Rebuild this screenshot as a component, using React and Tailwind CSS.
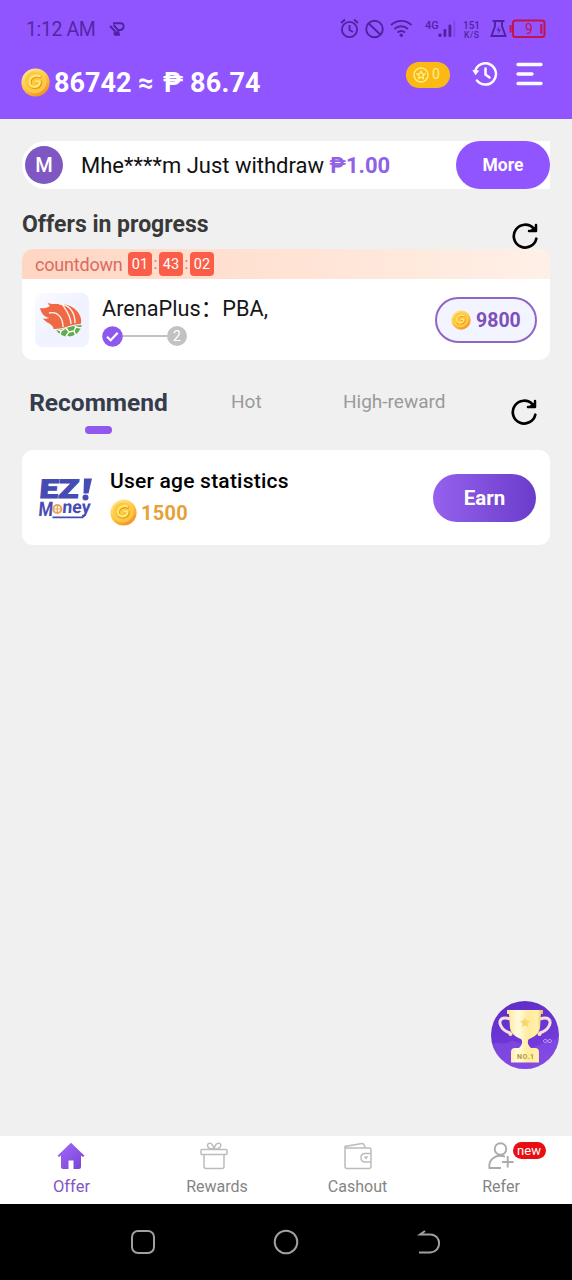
import React from "react";

function Coin({ id, className }) {
  return (
    <svg viewBox="0 0 28 28" className={className}>
      <defs>
        <linearGradient id={id} x1="0.2" y1="0" x2="0.8" y2="1">
          <stop offset="0" stopColor="#ffe9a0" />
          <stop offset="0.5" stopColor="#ffc53d" />
          <stop offset="1" stopColor="#f58a1c" />
        </linearGradient>
      </defs>
      <circle cx="14" cy="14" r="13.6" fill={`url(#${id})`} />
      <circle cx="13.6" cy="13.4" r="10.4" fill="#ffc93f" stroke="#ffd970" strokeWidth="0.6" />
      <path d="M19.500 8.800C14 6.400 8.200 9.400 8.600 14.900c.3 4.600 7.800 5.300 9.800 1.100l.5-2.600h-4.600" fill="none" stroke="#e9961a" strokeWidth="3.200" strokeLinejoin="round" />
      <path d="M19 8C13.500 5.800 7.800 8.800 8.200 14.300c.3 4.400 7.500 5.100 9.500 1.100l.5-2.500h-4.400" fill="none" stroke="#ffe973" strokeWidth="2.300" strokeLinejoin="round" />
    </svg>
  );
}

function StatusIcons() {
  return (
    <svg viewBox="0 0 212 24" className="h-6 w-[212px]" fill="none" stroke="#4f239f" strokeWidth="1.900">
      <circle cx="13.500" cy="12.500" r="7.600" />
      <path d="M13.500 8v5l3.500 2M5 6l4-3.500M22 6l-4-3.500" />
      <circle cx="38.500" cy="12" r="8.300" />
      <path d="M32.500 6.200l12 11.600" />
      <path d="M55 8c6-5.500 14.500-5.500 20.500 0M58.500 12c4-3.600 9.500-3.600 13.500 0M61.500 15.500c2.500-2 5-2 7.500 0" />
      <circle cx="65.300" cy="18.300" r="1.700" fill="#4f239f" stroke="none" />
      <g fill="#4f239f" stroke="none">
        <rect x="102.500" y="16.500" width="3" height="3.500" rx="1.200" />
        <rect x="107.500" y="12" width="2.800" height="8" rx="1.200" />
        <rect x="112.500" y="7.500" width="2.800" height="12.500" rx="1.200" />
        <rect x="117.300" y="3.500" width="2" height="16.500" rx="1" opacity="0.25" />
      </g>
      <path d="M156.500 4h12M159 4.500v4.500l-3.500 10h14l-3.500-10v-4.500" />
      <path d="M163.500 9l-3 4.500h2.500l-1 3.500 3-4.500h-2.500z" fill="#4f239f" stroke="none" />
      <rect x="177" y="3.600" width="31.500" height="16.500" rx="2.500" stroke="#c4124b" strokeWidth="2" />
      <path d="M174.600 8v7.500M205.300 7v9.700" stroke="#c4124b" strokeWidth="2" />
      <g fill="#4f239f" stroke="none" fontFamily="Roboto, sans-serif">
        <text x="89" y="11.500" fontSize="11" fontWeight="500">4G</text>
        <text x="127" y="11.500" fontSize="11.500" textLength="17" lengthAdjust="spacingAndGlyphs" fontWeight="500">151</text>
        <text x="128" y="20.500" fontSize="8.500" textLength="15" fontWeight="500">K/S</text>
        <text x="189" y="17.200" fontSize="14" fill="#c4124b">9</text>
      </g>
    </svg>
  );
}

function Refresh() {
  return (
    <svg viewBox="0 0 28 28" className="h-7 w-7" fill="none" stroke="#000" strokeWidth="2.700" strokeLinecap="round">
      <path d="M25.300 16.700A11.400 11.400 0 1 1 22.500 6.300" />
      <path d="M25 3v6h-7" strokeWidth="2.500" strokeLinejoin="round" />
      <path d="M18.500 8.500l6-4v4.500z" fill="#000" stroke="none" />
    </svg>
  );
}

function Header() {
  return (
    <header className="h-[119px] bg-[#9055ff]">
      <div className="flex h-[57px] items-center pl-[26px] pt-[2px]">
        <span className="w-[83px] text-[19.500px] tracking-[-0.400px] text-[#5426a6]">1:12 AM</span>
        <svg viewBox="0 0 16 14" className="-mt-[2px] h-[14px] w-4" fill="none" stroke="#4f239f" strokeWidth="1.900">
          <path d="M4 1.200h7.500c4.300 0 4 6.200 0 6.800H9L4.500 3M1 4l8.500 8.800M5 10.500l1 2.200h4L9 8.500" />
        </svg>
        <div className="ml-[211px] -mt-px"><StatusIcons /></div>
      </div>
      <div className="flex h-[52px] items-center text-[27px] font-bold text-white">
        <Coin id="coin-head" className="-mt-[2px] ml-[21px] h-[29px] w-[29px]" />
        <span className="ml-[4px] w-[84px]">86742</span>
        <span className="w-[25px] text-[27px]">≈</span>
        <span className="w-[27px]">₱</span>
        <span className="w-[216px] tracking-[0.200px]">86.74</span>
        <div className="-mt-[17px] flex h-[26px] w-[44px] items-center rounded-full bg-[#fdb913] pl-[7px]">
          <svg viewBox="0 0 16 16" className="h-4 w-4" fill="none" stroke="#fff08c" strokeWidth="1.400">
            <circle cx="8" cy="8" r="7" />
            <path d="M8 4.300l1.200 2.400 2.600.3-1.900 1.800.5 2.600L8 10.200l-2.400 1.200.5-2.600L4.200 7l2.600-.3z" />
          </svg>
          <span className="ml-[3px] text-[14px] font-normal text-[#fff08c]">0</span>
        </div>
        <svg viewBox="0 0 26 26" className="-mt-[18px] ml-[22px] h-[26px] w-[26px]" fill="none" stroke="#fff" strokeWidth="2.500" strokeLinecap="round">
          <path d="M3.200 10A10.600 10.600 0 1 1 5 19.500" />
          <path d="M13.500 7.500v6l4 3" />
          <path d="M.3 9l7 .4-3.800 4.900z" fill="#fff" stroke="none" />
        </svg>
        <svg viewBox="0 0 28 26" className="-mt-[18px] ml-[17px] h-[26px] w-7" stroke="#fff" strokeWidth="3.300" strokeLinecap="round">
          <path d="M3 3.500h23M3 13h14M3 22.500h23" />
        </svg>
      </div>
    </header>
  );
}

function NoticeBar() {
  return (
    <section className="flex h-12 items-center rounded-l-full bg-white pl-[3px]">
      <div className="flex h-[38px] w-[38px] shrink-0 items-center justify-center rounded-full bg-[#7f57c2] text-[20px] font-medium text-white">M</div>
      <p className="ml-[18px] w-[375px] whitespace-nowrap text-[22px] text-[#111]">
        Mhe****m Just withdraw <b className="font-bold text-[#9160e4]">₱1.00</b>
      </p>
      <button className="h-12 w-[94px] shrink-0 rounded-full bg-[#9055ff] pt-px text-[17.500px] font-bold text-white">More</button>
    </section>
  );
}

function Digits({ children }) {
  return <span className="flex h-6 w-6 items-center justify-center rounded-[4px] bg-[#fa5e49] pt-[2px] text-[14.500px] text-white">{children}</span>;
}

function ArenaLogo() {
  return (
    <svg viewBox="0 0 54 54" className="h-[54px] w-[54px]">
      <defs>
        <linearGradient id="tile" x2="1" y2="1"><stop stopColor="#fafbff" /><stop offset="0.5" stopColor="#f0f2ff" /><stop offset="1" stopColor="#f1f3ff" /></linearGradient>
        <clipPath id="lower"><path d="M17 37.500c11 0 19-5.500 30-5.500v17H17z" /></clipPath>
      </defs>
      <rect width="54" height="54" rx="8" fill="url(#tile)" />
      <path d="M5 15c5 1 8-.5 10-2-1-1-2-2-2.500-3 5 1.500 9 1 13 1 11 0 19 7 20.500 15 .4 2.500.2 3.500-.4 5C36 31 28 36.500 18.500 36c0-3-3-5-7-7l-4-3.500c3 .6 5 .4 7-.4C9 24 6 20 5 15z" fill="#ee6944" />
      <path d="M14 20c9-2 14 5 14 14M27 11c4 6 9 12 9 20M24 11c10 0 16 8 16 19" fill="none" stroke="#fff3ee" strokeWidth="1.400" />
      <g clipPath="url(#lower)">
        <circle cx="33" cy="29.500" r="14" fill="#62ac4c" />
        <path d="M22 36l4 2-1 4M26 38l5-3 3 4-3 4M31 36l1-3M34 39l5-1 2-4 5 1M39 38l2 5M31 42l3 3M41 34l-3-3" fill="none" stroke="#fff" strokeWidth="1.400" />
      </g>
    </svg>
  );
}

function ProgressCard() {
  return (
    <section className="h-[111px] overflow-hidden rounded-[11px] bg-white">
      <div className="flex h-[30px] items-center bg-linear-to-r from-[#ffd6c2] to-[#fff0e7] pl-[13px] text-[18px] text-[#d96b61]">
        <span className="w-[93px] tracking-[-0.200px]">countdown</span>
        <Digits>01</Digits>
        <span className="w-[7px] text-center text-[16px]">:</span>
        <Digits>43</Digits>
        <span className="w-[7px] text-center text-[16px]">:</span>
        <Digits>02</Digits>
      </div>
      <div className="flex h-[81px] items-center pl-[13px]">
        <ArenaLogo />
        <div className="ml-[13px] flex w-[333px] flex-col pt-[4px]">
          <span className="h-[29px] whitespace-nowrap text-[21.700px] leading-[24px] text-[#161616] font-['Roboto','Noto_Sans_CJK_SC',sans-serif]">ArenaPlus：PBA,</span>
          <div className="flex h-[21px] items-center">
            <svg viewBox="0 0 21 21" className="h-[21px] w-[21px]">
              <circle cx="10.500" cy="10.500" r="10.300" fill="#8e57ee" />
              <path d="M5 10.800l3.700 3.500 7-7.500" fill="none" stroke="#fff" strokeWidth="2.200" />
            </svg>
            <span className="h-[2px] w-[44px] bg-[#c2c2c2]" />
            <span className="flex h-[20px] w-[20px] items-center justify-center rounded-full bg-[#c2c2c2] pt-px text-[14px] text-white">2</span>
          </div>
        </div>
        <button className="flex h-[46px] w-[102px] shrink-0 items-center rounded-full border-2 border-[#8f66c4] bg-[#f2f4ff] pl-[14px] text-[19.500px] font-bold text-[#7f50b8]">
          <Coin id="coin-progress" className="h-5 w-5" />
          <span className="ml-[5px] pt-[3px]">9800</span>
        </button>
      </div>
    </section>
  );
}

function Tabs() {
  return (
    <div className="flex h-[90px] pt-[26px]">
      <div className="flex w-[153px] flex-col items-center">
        <span className="h-[40px] text-[24.500px] leading-[33px] font-bold text-[#353c4c]">Recommend</span>
        <span className="h-2 w-[27px] rounded-full bg-[#9058ee]" />
      </div>
      <span className="ml-[56px] w-[112px] text-[19px] leading-[31px] text-[#9a9a9a]">Hot</span>
      <span className="w-[167px] text-[19px] leading-[31px] text-[#9a9a9a]">High-reward</span>
      <div className="mt-[12px]"><Refresh /></div>
    </div>
  );
}

function EzLogo() {
  return (
    <svg viewBox="0 0 56 46" className="-ml-px h-[46px] w-14" fontFamily="Roboto, sans-serif" fill="#474cb4">
      <g transform="translate(2 22.500) skewX(-5)">
        <text x="0" y="0" fontSize="26" fontWeight="900" stroke="#474cb4" strokeWidth="1" textLength="39" lengthAdjust="spacingAndGlyphs">EZ</text>
      </g>
      <path d="M47 3.500h8l-3.500 15H46.500z" />
      <circle cx="48.500" cy="22.500" r="3" />
      <g transform="translate(1 41) skewX(-5)">
        <text x="0" y="0" fontSize="20" fontWeight="700" textLength="14.500" lengthAdjust="spacingAndGlyphs">M</text>
      </g>
      <g transform="translate(25 38) skewX(-5)">
        <text x="0" y="0" fontSize="18" fontWeight="700" textLength="28" lengthAdjust="spacingAndGlyphs">ney</text>
      </g>
      <path d="M15.500 42.300h30l3-3" fill="none" stroke="#474cb4" strokeWidth="1.700" />
      <circle cx="20.300" cy="34" r="4" fill="#fff" stroke="#e8a356" strokeWidth="2" />
      <path d="M17 34h6.500M20.300 31v6" stroke="#e8a356" strokeWidth="1.200" />
    </svg>
  );
}

function OfferCard() {
  return (
    <section className="flex h-[95px] items-center rounded-[11px] bg-white pl-4">
      <EzLogo />
      <div className="ml-[17px] w-[323px]">
        <div className="h-[31px] text-[21px] leading-[29px] font-medium tracking-[0.220px] text-black">User age statistics</div>
        <div className="flex h-[30px] items-center">
          <Coin id="coin-offer" className="-mt-px h-[27px] w-[27px]" />
          <span className="ml-[4px] text-[20px] font-bold tracking-[0.300px] text-[#e6a236]">1500</span>
        </div>
      </div>
      <button className="h-12 w-[103px] shrink-0 rounded-full bg-linear-to-r from-[#9561ee] to-[#6b3cca] pt-px text-[20.500px] font-bold text-white">Earn</button>
    </section>
  );
}

function Trophy() {
  return (
    <svg viewBox="0 0 68 68" className="absolute left-[491px] top-[1001px] h-[68px] w-[68px]">
      <defs>
        <linearGradient id="gold">
          <stop offset="0" stopColor="#ffe58c" />
          <stop offset="0.3" stopColor="#fffbe0" />
          <stop offset="0.6" stopColor="#ffeb9c" />
          <stop offset="0.85" stopColor="#fff0ac" />
          <stop offset="1" stopColor="#e9b94e" />
        </linearGradient>
        <linearGradient id="violet" x2="0.3" y2="1">
          <stop offset="0" stopColor="#5c2bc4" />
          <stop offset="1" stopColor="#793fe0" />
        </linearGradient>
        <clipPath id="disc"><circle cx="34" cy="34" r="34" /></clipPath>
      </defs>
      <g clipPath="url(#disc)">
        <rect width="68" height="68" fill="url(#violet)" />
        <path d="M0 44c8-5 12 1 18-3s8 3 12 1l8 6 12-5 20-6v35H0z" fill="#8c54e8" opacity="0.500" />
      </g>
      <path d="M19 18c-8-3-11.500 1-9.500 6s6 7 10 8M49 18c8-3 11.500 1 9.500 6s-6 7-10 8" fill="none" stroke="#f4e1df" strokeWidth="3" />
      <path d="M16 9h36v4h-2l-1 14c-1 6-6 9-11 11-2 2-1.500 6 2 9h4q4 0 4 4v10.500H20V51q0-4 4-4h4c3.500-3 4-7 2-9-5-2-10-5-11-11l-1-14h-2z" fill="url(#gold)" />
      <path d="M34 16.500l1.500 3 3.500.5-2.500 2.400.6 3.500-3.100-1.600-3.100 1.600.6-3.500-2.500-2.400 3.500-.5z" fill="#f6d66e" />
      <circle cx="19.500" cy="33" r="2" fill="#ffe5b0" />
      <circle cx="48.500" cy="33" r="2" fill="#ffe5b0" />
      <text x="26" y="57.500" fontFamily="Roboto, sans-serif" fontSize="7" fontWeight="700" textLength="17" fill="#bb9630">NO.1</text>
      <path d="M56.500 40c-1.500-2.500-4-1.500-4 0s2.500 2.500 4 0 4-1.500 4 0-2.500 2.500-4 0" fill="none" stroke="#cfa8ff" strokeWidth="1" />
    </svg>
  );
}

function NavItem({ label, active, children }) {
  return (
    <div className="flex flex-1 flex-col items-center pt-[6px]">
      <div className="h-[29px]">{children}</div>
      <span className={active ? "text-[16.500px] leading-[32px] text-[#8256c5]" : "text-[16px] leading-[32px] text-[#858585]"}>{label}</span>
    </div>
  );
}

function BottomNav() {
  return (
    <nav className="flex h-[68px] bg-white">
      <NavItem label="Offer" active>
        <svg viewBox="0 0 28 28" className="-ml-px h-7 w-7">
          <defs><linearGradient id="home" x2="1" y2="1"><stop stopColor="#a46bff" /><stop offset="1" stopColor="#7742cf" /></linearGradient></defs>
          <path d="M14 .8L27.500 13.800l-1.500 1.300-2-1.500v11.500q0 1.900-2 1.900h-5.500v-8.500h-5v8.500H6q-2 0-2-1.900V13.600l-2 1.500L.5 13.800z" fill="url(#home)" />
        </svg>
      </NavItem>
      <NavItem label={<span className="pl-[5px]">Rewards</span>}>
        <svg viewBox="0 0 28 28" className="-ml-px h-7 w-7" fill="none" stroke="#bcbcbc" strokeWidth="1.500">
          <rect x="1" y="7.500" width="26" height="5" rx="1" />
          <path d="M4 12.500v12q0 2 2 2h16q2 0 2-2v-12M13 7C6.500 7 6.500 1.500 9.500 1.200S13.500 5 14 7C14.500 5 16 .8 19 1.200S21.500 7 15 7" />
        </svg>
      </NavItem>
      <NavItem label="Cashout">
        <svg viewBox="0 0 28 28" className="h-7 w-7" fill="none" stroke="#bcbcbc" strokeWidth="1.500">
          <path d="M1 6h24q2 0 2 2v16.500q0 2-2 2H3q-2 0-2-2V4.500L18 1.500q2-.2 3 4M27 11.500h-6q-4 0-4 4.300t4 4.300h6" />
          <path d="M20.500 14.500l1.500 1.700 1.500-2" />
        </svg>
      </NavItem>
      <NavItem label={<span className="pl-px">Refer</span>}>
        <div className="relative">
          <svg viewBox="0 0 28 28" className="h-7 w-7" fill="none" stroke="#ababab" strokeWidth="1.900">
            <circle cx="13.500" cy="7" r="5.800" />
            <path d="M14 26H2.500C1 17 9 12 18 14.500M15 20h11.500M20.700 14v11.500" />
          </svg>
          <span className="absolute left-[26px] top-0 flex h-[17px] w-[33px] items-center justify-center rounded-full bg-[#e90e12] text-[13px] leading-none text-white">new</span>
        </div>
      </NavItem>
    </nav>
  );
}

function SystemNav() {
  return (
    <div className="flex h-[76px] items-center justify-center gap-[117px] bg-black">
      <svg viewBox="0 0 26 26" className="h-[26px] w-[26px]" fill="none" stroke="#a0a0a0" strokeWidth="2"><rect x="2" y="2" width="22" height="22" rx="6" /></svg>
      <svg viewBox="0 0 26 26" className="h-[26px] w-[26px]" fill="none" stroke="#a0a0a0" strokeWidth="2"><circle cx="13" cy="13" r="11.300" /></svg>
      <svg viewBox="0 0 26 26" className="h-[26px] w-[26px]" fill="none" stroke="#a0a0a0" strokeWidth="2"><path d="M3 23.500h11.500c11.500-1 11.500-17.500 0-18H4l5-3.500" /></svg>
    </div>
  );
}

export default function App() {
  return (
    <div className="relative flex h-[1280px] w-[572px] flex-col overflow-hidden bg-[#f0f0f0] font-['Roboto',sans-serif]">
      <Header />
      <main className="flex-1 px-[22px] pt-[22px]">
        <NoticeBar />
        <div className="flex h-[60px] justify-between pr-[11px]">
          <h2 className="pt-[19px] text-[23px] leading-[34px] font-bold text-[#393939]">Offers in progress</h2>
          <div className="pt-[33px]"><Refresh /></div>
        </div>
        <ProgressCard />
        <Tabs />
        <OfferCard />
      </main>
      <BottomNav />
      <SystemNav />
      <Trophy />
    </div>
  );
}
